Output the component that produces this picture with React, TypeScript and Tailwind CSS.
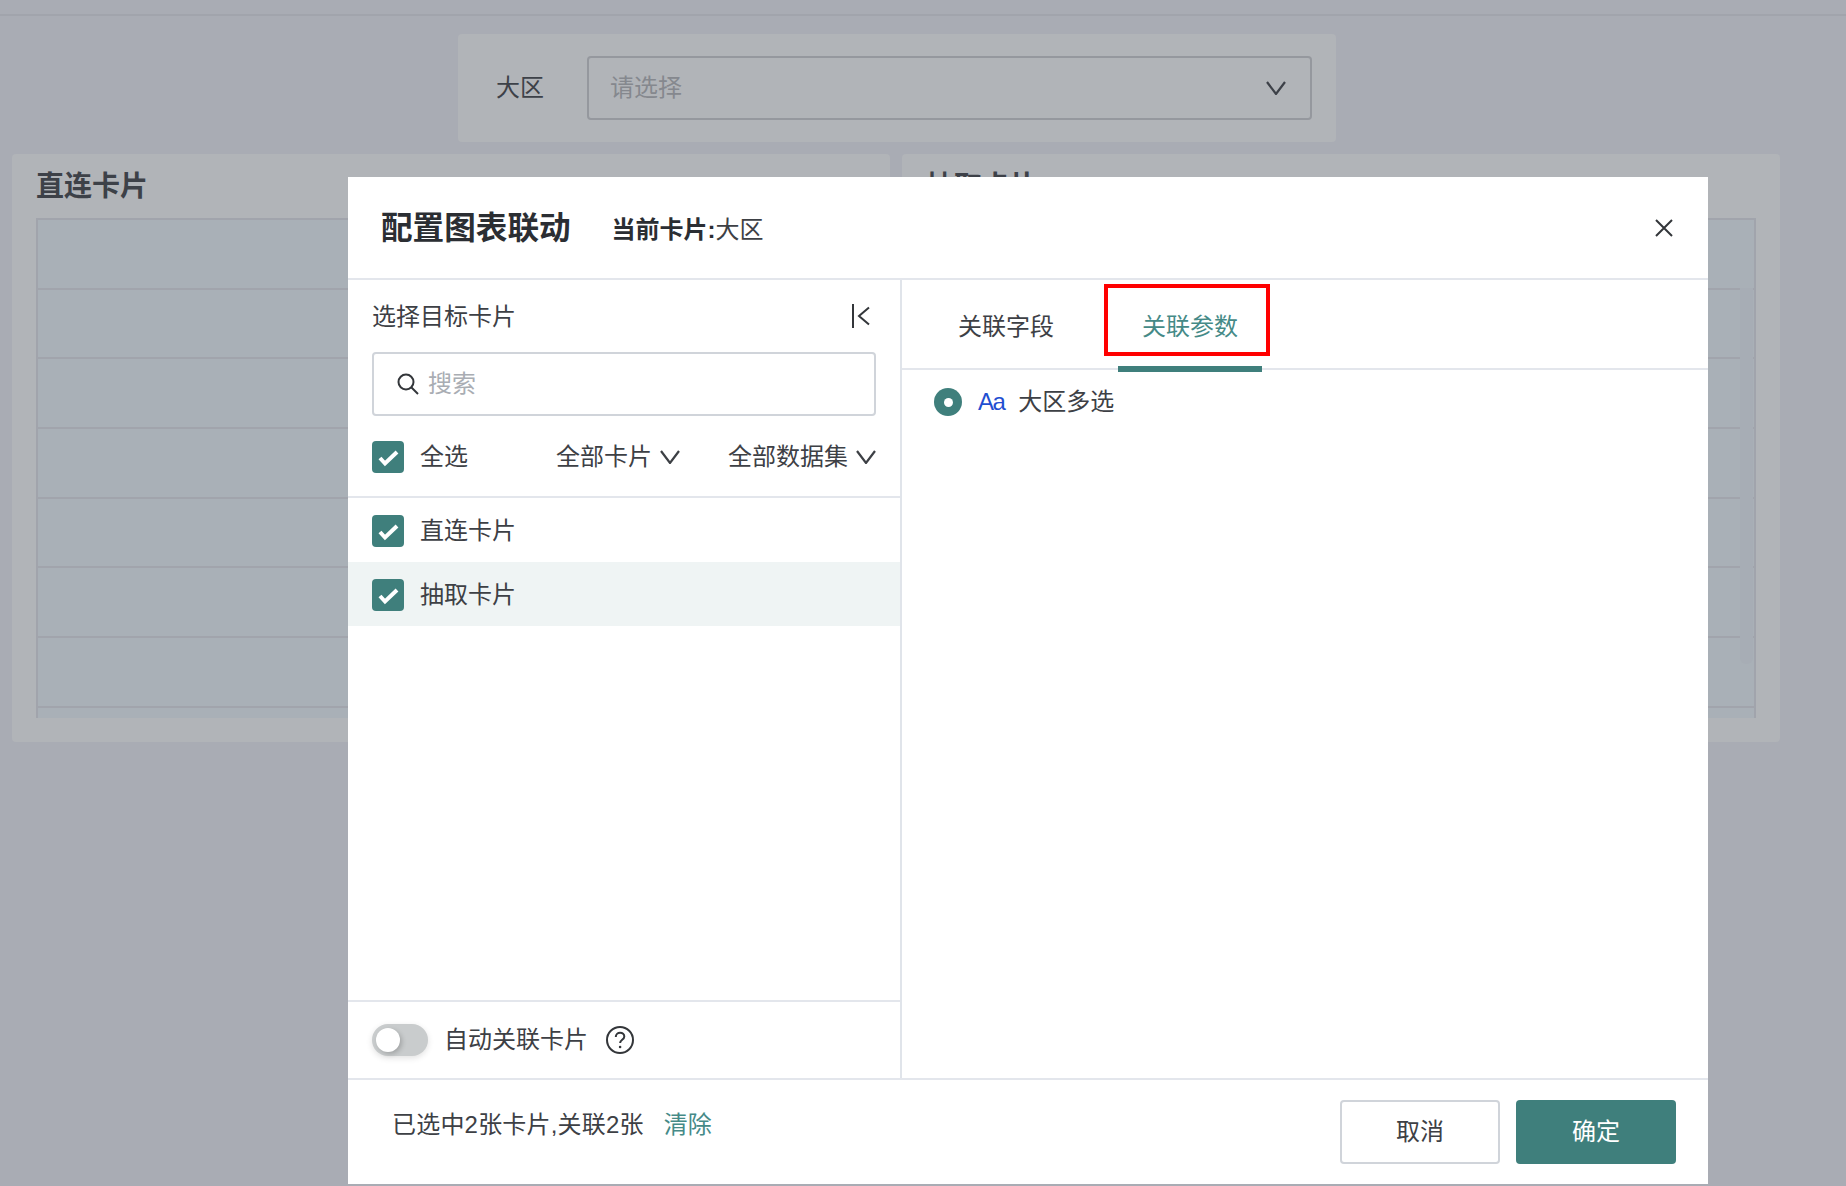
import React from "react";

const FONT = '"Liberation Sans", "Noto Sans CJK SC", sans-serif';

function Chevron({ className = "" }: { className?: string }) {
  return (
    <svg viewBox="0 0 20 14" className={className} fill="none" stroke="currentColor" strokeWidth="2.2">
      <path d="M1 1l9 12 9-12" />
    </svg>
  );
}

function Check() {
  return (
    <span className="flex h-8 w-8 shrink-0 items-center justify-center rounded-[4px] bg-[#3f7f7c]">
      <svg viewBox="0 0 32 32" className="h-8 w-8" fill="none" stroke="#ffffff" strokeWidth="4">
        <path d="M8 17l5 5.5L25 11" />
      </svg>
    </span>
  );
}

function Table({ scrollbar }: { scrollbar?: boolean }) {
  const rows = [0, 1, 2, 3, 4, 5, 6];
  return (
    <div className="relative mx-6 h-[500px] overflow-hidden border-x-2 border-t-2 border-x-[#a1a4ac] border-t-[#a1a4ac] bg-[#a9b0b7]">
      {rows.map((r) => (
        <div key={r} className="h-[69.7px] border-b-2 border-[#a1a4ac]" />
      ))}
      {scrollbar && <div className="absolute right-px top-[68px] h-[376px] w-[13px] rounded-b-[6px] bg-[#a7adb5]" />}
    </div>
  );
}

function Card({ title, scrollbar }: { title: string; scrollbar?: boolean }) {
  return (
    <div className="h-[588px] rounded-[4px] bg-[#b1b4b8]">
      <div className="flex h-[64px] items-center pl-6 pt-[2px] text-[28px] font-semibold leading-[36px] text-[#3d4148]">{title}</div>
      <Table scrollbar={scrollbar} />
    </div>
  );
}

export default function App() {
  return (
    <div className="relative h-[1186px] w-[1846px] overflow-hidden bg-[#a9acb4]" style={{ fontFamily: FONT }}>
      {/* Page beneath the overlay */}
      <div className="h-4 border-b-2 border-[#a1a4ac]" />
      <div className="ml-[458px] mt-[18px] flex h-[108px] w-[878px] items-center rounded-[4px] bg-[#b1b4b8] pl-[38px] pr-6">
        <span className="w-[91px] text-2xl leading-9 text-[#3d4148]">大区</span>
        <div className="flex h-16 flex-1 items-center justify-between rounded-[4px] border-2 border-[#95989e] pl-[21px] pr-6">
          <span className="text-2xl leading-9 text-[#85888e]">请选择</span>
          <Chevron className="h-[14px] w-[20px] text-[#3d4148]" />
        </div>
      </div>
      <div className="mx-3 mt-3 grid w-[1768px] grid-cols-[878px_878px] gap-3">
        <Card title="直连卡片" />
        <Card title="抽取卡片" scrollbar />
      </div>

      {/* Modal */}
      <div className="absolute left-[348px] top-[177px] flex h-[1007px] w-[1360px] flex-col bg-white text-[#3d4045]">
        <div className="flex h-[103px] shrink-0 items-center border-b-2 border-[#e3e6ec] pl-[33px] pr-[35px]">
          <span className="text-[31.6px] font-bold leading-[44px] text-[#2b2e33]">配置图表联动</span>
          <span className="ml-[41px] mt-1 text-2xl leading-9">
            <span className="font-bold text-[#2b2e33]">当前卡片:</span>大区
          </span>
          <svg viewBox="0 0 18 18" className="ml-auto h-[18px] w-[18px]" fill="none" stroke="#33363a" strokeWidth="2">
            <path d="M1 1l16 16M17 1L1 17" />
          </svg>
        </div>

        <div className="flex min-h-0 flex-1">
          {/* Left column */}
          <div className="flex w-[554px] shrink-0 flex-col border-r-2 border-[#e0e4ea]">
            <div className="flex h-[72px] shrink-0 items-center justify-between pl-6 pr-[29px]">
              <span className="pt-px text-2xl leading-9">选择目标卡片</span>
              <svg viewBox="0 0 20 24" className="h-6 w-5" fill="none" stroke="#33363a" strokeWidth="2">
                <path d="M2 0v24M18 3.5L8 12l10 8.5" />
              </svg>
            </div>
            <div className="mx-6 flex h-16 shrink-0 items-center rounded-[4px] border-2 border-[#d0d4da] pl-[23px]">
              <svg viewBox="0 0 22 22" className="h-[22px] w-[22px]" fill="none" stroke="#33363a" strokeWidth="2">
                <circle cx="9" cy="9" r="7.5" />
                <path d="M14.5 14.5l6.5 6.5" />
              </svg>
              <span className="ml-[9px] text-2xl leading-9 text-[#a9adb3]">搜索</span>
            </div>
            <div className="flex h-[82px] shrink-0 items-center border-b-2 border-[#e3e6ec] pl-6 pt-[2px]">
              <Check />
              <span className="ml-4 text-2xl leading-9">全选</span>
              <span className="ml-[88px] text-2xl leading-9">全部卡片</span>
              <Chevron className="ml-2 h-[14px] w-5" />
              <span className="ml-[48px] text-2xl leading-9">全部数据集</span>
              <Chevron className="ml-2 h-[14px] w-5" />
            </div>
            <div className="min-h-0 flex-1">
              <div className="flex h-16 items-center pl-6 pt-[2px]">
                <Check />
                <span className="ml-4 text-2xl leading-9">直连卡片</span>
              </div>
              <div className="flex h-16 items-center bg-[#eff4f4] pl-6 pt-[2px]">
                <Check />
                <span className="ml-4 text-2xl leading-9">抽取卡片</span>
              </div>
            </div>
            <div className="flex h-[78px] shrink-0 items-center border-t-2 border-[#e3e6ec] pl-6">
              <span className="flex h-8 w-14 items-center rounded-full bg-[#c9cccd] pl-1 shadow-[0_2px_6px_rgba(0,0,0,0.12)]">
                <span className="h-6 w-6 rounded-full bg-white shadow-[2px_2px_5px_rgba(0,0,0,0.2)]" />
              </span>
              <span className="ml-4 text-2xl leading-9">自动关联卡片</span>
              <svg viewBox="0 0 28 28" className="ml-[18px] h-7 w-7" fill="none" stroke="#33363a" strokeWidth="2">
                <circle cx="14" cy="14" r="13" />
                <path d="M9.8 11c0-2.6 1.9-4.3 4.3-4.3s4.2 1.6 4.2 3.8c0 3.2-4.2 3.4-4.2 6.5" />
                <circle cx="14.1" cy="21" r="1.3" fill="#33363a" stroke="none" />
              </svg>
            </div>
          </div>

          {/* Right column */}
          <div className="min-w-0 flex-1">
            <div className="flex h-[90px] border-b-2 border-[#e3e6ec] pl-[33px]">
              <div className="flex h-[88px] w-[144px] items-center justify-center pr-[2px] pt-[6px] text-2xl leading-9">关联字段</div>
              <div className="relative ml-[39px] flex h-[88px] w-[144px] items-center justify-center pt-[6px] text-2xl leading-9 text-[#458a87]">
                关联参数
                <span className="absolute bottom-[-4px] left-0 h-[6px] w-full bg-[#3f7f7c]" />
              </div>
            </div>
            <div className="flex items-center pl-8 pt-4">
              <span className="flex h-7 w-7 items-center justify-center rounded-full bg-[#3f7f7c]">
                <span className="h-[9px] w-[9px] rounded-full bg-white" />
              </span>
              <span className="ml-4 text-2xl leading-8 tracking-[-1.5px] text-[#1f4fd1]">Aa</span>
              <span className="ml-[14px] text-2xl leading-8">大区多选</span>
            </div>
          </div>
        </div>

        <div className="flex h-[106px] shrink-0 items-center justify-between border-t-2 border-[#e3e6ec] pl-11 pr-8">
          <div className="mb-[14px] flex items-center text-2xl leading-9">
            <span className="tracking-[0.2px]">已选中2张卡片,关联2张</span>
            <span className="ml-5 text-[#458a87]">清除</span>
          </div>
          <div className="flex gap-4">
            <button className="h-16 w-40 rounded-[4px] border-2 border-[#d0d4da] bg-white text-2xl">取消</button>
            <button className="h-16 w-40 rounded-[4px] bg-[#3f7f7c] text-2xl text-white">确定</button>
          </div>
        </div>

        {/* Red annotation frame */}
        <div className="pointer-events-none absolute left-[756px] top-[107px] h-[72px] w-[166px] border-4 border-[#ff0000]" />
      </div>
    </div>
  );
}
